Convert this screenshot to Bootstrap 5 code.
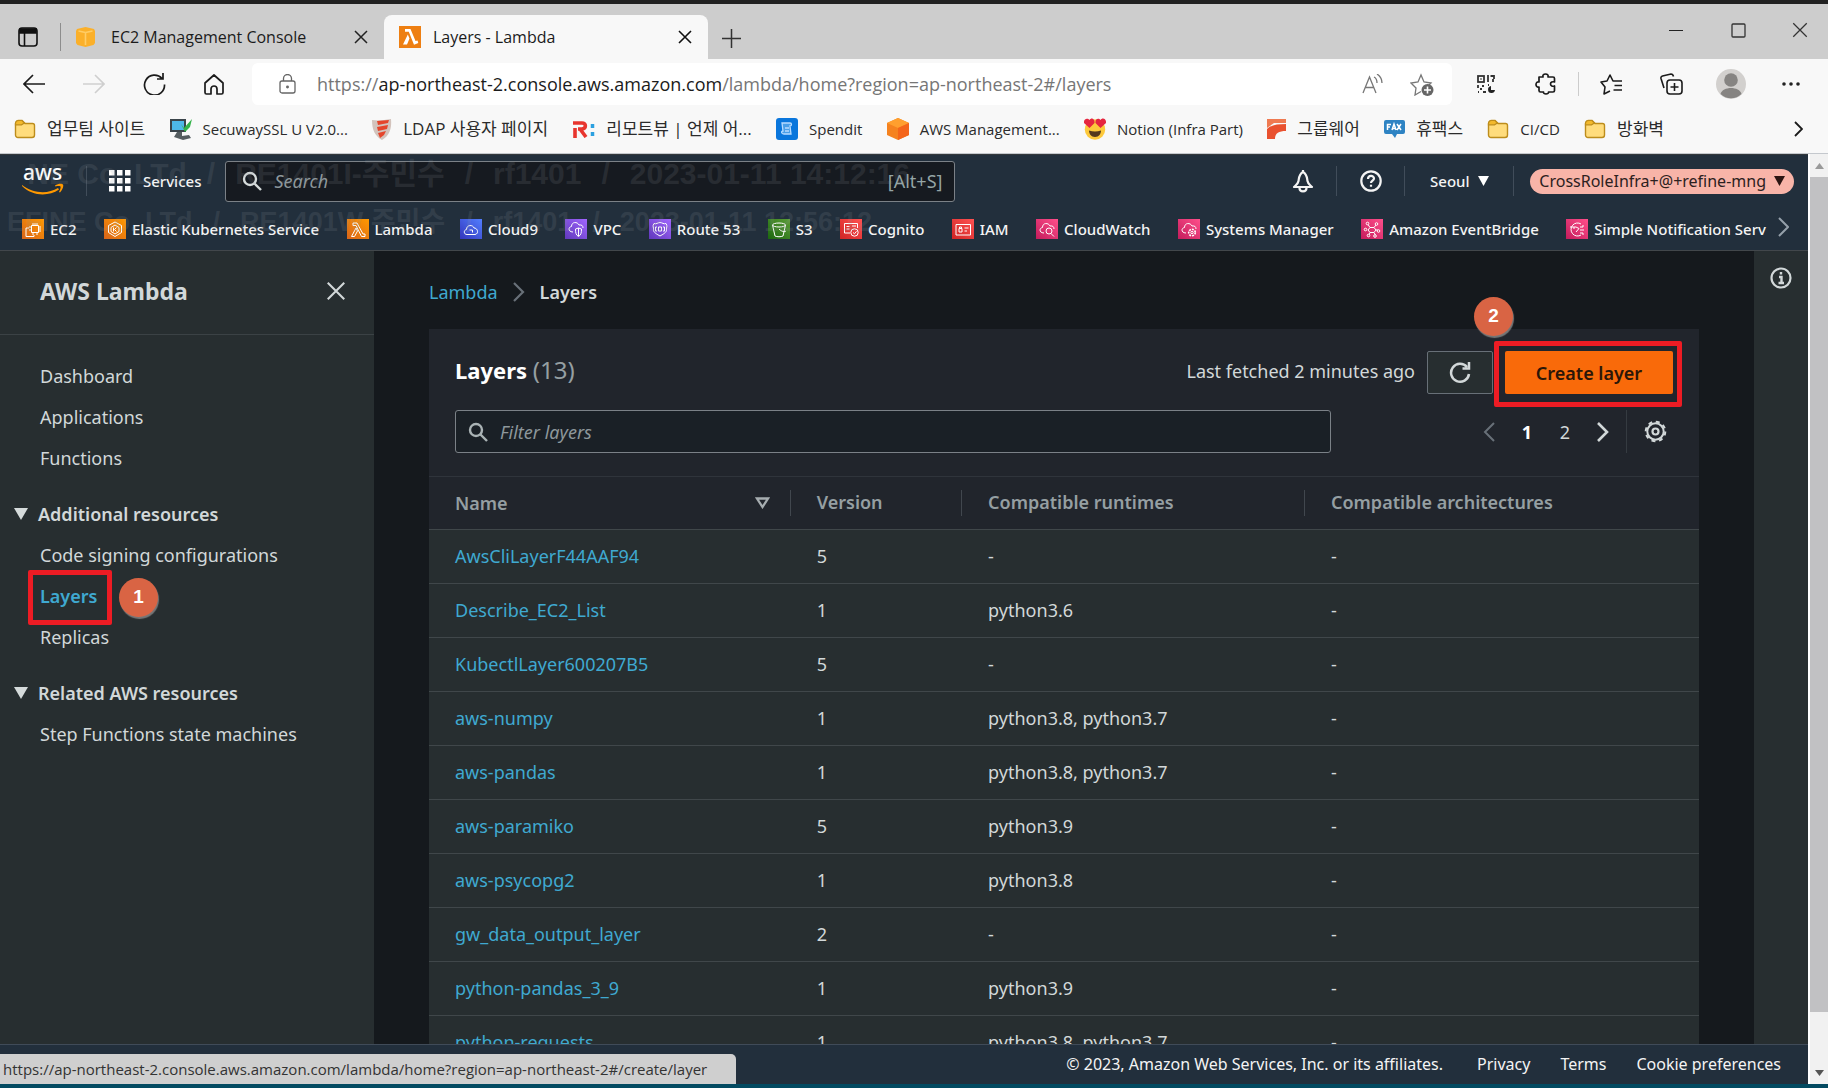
<!DOCTYPE html>
<html lang="en">
<head>
<meta charset="utf-8">
<meta name="viewport" content="width=device-width, initial-scale=1">
<title>Layers - Lambda</title>
<link href="https://cdn.jsdelivr.net/npm/bootstrap@5.3.0/dist/css/bootstrap.min.css" rel="stylesheet">
<style>
:root{--ui:"Noto Sans","Noto Sans CJK KR",sans-serif;--chrome:"Open Sans","Noto Sans CJK KR",sans-serif;--line:#40474a;--pane:#272e30;--link:#3fa9d0;--txt:#d2d8d9}
body{font-family:var(--ui);font-size:18px;line-height:24px;color:var(--txt);background:#15191d;overflow:hidden}
button{background:none;border:0;padding:0;color:inherit}
svg{display:block;flex:none}
svg:not([fill]){fill:none}
svg:not([stroke]){stroke:currentColor}
a{text-decoration:none}
.ic{display:flex;align-items:center;justify-content:center;flex:none}
/* browser chrome */
.browser{font-family:var(--chrome);color:#1b1b1b}
.topstrip{height:4px;background:#212121}
.tabbar{height:55px;background:#cdcdcd;font-size:16px}
.tabitem{height:44px;padding:0 15px}
.tabitem.idle{width:323px}
.tabitem.on{width:324px;background:#f8f8f8;border-radius:8px 8px 0 0}
.vsep{width:1px;height:28px;background:#8d8d8d}
.wbtn{width:62px;height:52px}
.wbtns{margin-right:-3px}
.newtab{width:46px;height:42px}
.toolbar2{height:50px;background:#f8f8f8;padding:0 7px 0 4px}
.toolsep{width:1px;height:24px;margin:0 2px;background:#ccc}
.slot{width:60px;height:42px}
.urlbtn{width:50px}
.address{height:42px;background:#fff;border-radius:6px;font-size:18px;padding:0 5px;color:#767676}
.address b{font-weight:400;color:#1b1b1b}
.favs{height:45px;background:#f8f8f8;font-size:15px;padding-left:14px;border-bottom:1px solid #c4c8cd}
.favs a{color:#2b2b2b;gap:11px}
.favs a.ko{font-size:17px}
.favlist{width:1650px}
/* console */
.topnav{background:#222f3c;border-top:1px solid #33383c;border-bottom:1px solid #42474b;color:#f4f4f4;height:97px}
.navrow{height:46px;padding:6px 14px 0 22px}
.navsep{width:1px;height:30px;background:#414d5a}
.navsep.wide{margin:0 22px}
.fieldbox{border:1px solid #7b8187;border-radius:3px;background:#161a20}
.fieldbox input{background:none;border:0;outline:0;color:inherit;font-style:italic;min-width:0}
.fieldbox input::placeholder{color:#8d979b;opacity:1}
.navsearch{width:730px;height:41px;margin-left:24px}
.kbd-hint{color:#95a5a6}
.pill{background:#f8b4a8;color:#2c2120;border-radius:13px;height:25px;padding:0 9px;font-size:16px}
.svc{font-size:15px;font-weight:500;color:#f4f4f4}
.svcbar{height:48px}
.svclist{width:1744px;margin-left:22px}
.svclist a{color:inherit;gap:6px}
.region{width:108px}
.bell{width:67px}
.wm{left:0;font:bold 30px/34px "Liberation Sans","Noto Sans CJK KR",sans-serif;color:#8f959b;opacity:.15;gap:20px;pointer-events:none;white-space:nowrap}
.wm1{top:2px;width:910px}
.wm2{top:50px;width:872px;font-size:27px}
.side{width:374px;background:var(--pane)}
.side .top{height:84px;border-bottom:1px solid #3b4245;padding:0 25px 4px 40px;font-size:23px}
.side a{color:var(--txt);height:41px;display:flex;align-items:center;padding-left:40px}
.side a.cur{color:var(--link);font-weight:600}
.side .sec{padding-left:14px;height:41px;gap:10px;margin-top:15px;font-weight:600}
.redbox{border:5px solid #ed1c24;border-radius:2px;pointer-events:none}
.r1{left:28px;top:-5px;width:84px;height:55px}
.r2{left:-11px;right:-9px;top:-10px;bottom:-13px}
.dot{width:39px;height:39px;border-radius:50%;background:#d96444;color:#fff;font:bold 19px/37px "Liberation Sans",sans-serif;text-align:center;box-shadow:1px 2px 1px #777}
.d1{left:119px;top:3px}
.d2{left:-31px;top:-54px}
.mainarea{padding:0 55px;min-width:0}
.crumb{height:78px;gap:15px}
.here{font-weight:600}
.bluelink{color:var(--link)}
.panel{background:#21252c}
.phead{padding:22px 26px 23px;border-bottom:1px solid #2f343b}
.phead h1{font-size:22px;color:#fff}
.count{color:#959fa2;font-size:24px}
.btn-ref{width:66px;height:43px;border:1px solid #687078;border-radius:2px;background:var(--pane)}
.btn-create{width:168px;height:43px;background:#f96a0a;border:0;border-radius:2px;color:#2b1608;font-weight:600}
.filter{width:876px;height:43px;background:#1a2026}
.pg{width:38px;height:43px}
.pgsep{width:1px;height:43px;background:#353b41}
.gearbtn{width:35px;margin-left:11px}
.table.lay{table-layout:fixed;margin:0;--bs-table-bg:transparent;color:var(--txt);border-color:var(--line)}
.lay .c1{width:28.4%}.lay .c2{width:13.5%}.lay .c3{width:27%}
.lay th{padding:0;height:52px;color:#959fa2;font-weight:600;border-bottom:1px solid var(--line);vertical-align:middle}
.lay td{padding:0 0 0 27px;height:54px;background:var(--pane);border-bottom:1px solid var(--line);vertical-align:middle;color:var(--txt);box-shadow:none}
.lay td:first-child{padding-left:26px}
.hc{height:26px;padding-left:26px;border-left:1px solid #41474e}
.hc.first{border:0;padding-right:20px}
.tools{width:54px;background:var(--pane)}
.foot{height:40px;background:#222f3c;border-top:1px solid #404b58;font-size:16px;color:#f4f4f4;padding:0 27px 1px 0;gap:30px}
.foot a{color:#f4f4f4}
.sbar{width:20px;background:#f1f1f1;border-left:2px solid #fff}
.arrowcell{height:23px}
.thumb{background:#c1c1c3;height:835px}
.status{left:0;bottom:4px;height:30px;min-width:736px;background:#cfcfcf;color:#333;border-radius:0 5px 0 0;font:15px/30px var(--chrome);padding:0 10px 0 3px}
.bottomstrip{height:4px;background:#034a61}
.fit{min-height:0;min-width:0}
</style>
<script src="https://cdn.jsdelivr.net/npm/bootstrap@5.3.0/dist/js/bootstrap.bundle.min.js"></script>
</head>
<body class="d-flex flex-column vh-100 position-relative">
<svg width="0" height="0" class="position-absolute" aria-hidden="true">
 <defs>
  <linearGradient id="go" x1="0" y1="1" x2="1" y2="0"><stop offset="0" stop-color="#d8641a"/><stop offset="1" stop-color="#f90"/></linearGradient>
  <linearGradient id="gb" x1="0" y1="1" x2="1" y2="0"><stop offset="0" stop-color="#3334bb"/><stop offset="1" stop-color="#527fff"/></linearGradient>
  <linearGradient id="gp" x1="0" y1="1" x2="1" y2="0"><stop offset="0" stop-color="#6038bb"/><stop offset="1" stop-color="#a166ff"/></linearGradient>
  <linearGradient id="gg" x1="0" y1="1" x2="1" y2="0"><stop offset="0" stop-color="#1b660f"/><stop offset="1" stop-color="#5c9e36"/></linearGradient>
  <linearGradient id="gr" x1="0" y1="1" x2="1" y2="0"><stop offset="0" stop-color="#cf2424"/><stop offset="1" stop-color="#ff5252"/></linearGradient>
  <linearGradient id="gk" x1="0" y1="1" x2="1" y2="0"><stop offset="0" stop-color="#c41c5c"/><stop offset="1" stop-color="#ff4f8b"/></linearGradient>
  <symbol id="x" viewBox="0 0 16 16"><path d="M2 2l12 12M14 2L2 14"/></symbol>
  <symbol id="mag" viewBox="0 0 20 20"><circle cx="8" cy="8" r="6"/><path d="M12.500 12.500L19 19"/></symbol>
  <symbol id="folder" viewBox="0 0 22 20"><path d="M1.500 4.500a3 3 0 0 1 3-3H8l3 3h7.500a2 2 0 0 1 2 2V16a2.500 2.500 0 0 1-2.500 2.500H4A2.500 2.500 0 0 1 1.500 16z" fill="#ffdc7c" stroke="#bd8d1c" stroke-width="1.400"/><path d="M1.500 5.800h6L10.500 4 8 1.500H4.500a3 3 0 0 0-3 3z" fill="#f3b92c" stroke="#bd8d1c" stroke-width="1.200"/></symbol>
 </defs>
</svg>

<header class="browser flex-shrink-0">
 <div class="topstrip"></div>
 <div class="tabbar d-flex align-items-end">
  <div class="d-flex align-items-center flex-shrink-0 tabitem px-0">
   <button class="ic slot pe-1" aria-label="Tab actions"><svg width="20" height="20" viewBox="0 0 20 20" stroke="#111" stroke-width="1.600"><rect x="1" y="1" width="18" height="18" rx="3"/><path d="M2 2h16v4H2z" fill="#111"/><path d="M6.500 6v13"/></svg></button>
   <span class="vsep"></span>
  </div>
  <div class="tabitem idle d-flex align-items-center">
   <svg width="19" height="20" viewBox="0 0 19 20" stroke="none"><path d="M9.500 0L18 2l1 2v12l-1.500 2-8 2-8-2L0 16V4l1-2z" fill="#fbb02a"/><path d="M9.500 5.500l7-1.500M9.500 5.500L2.500 4M9.500 6v12" stroke="#ffcd66" stroke-width="1.600"/></svg>
   <span class="flex-fill ps-3">EC2 Management Console</span>
   <button class="ic" aria-label="Close tab"><svg width="16" height="16" stroke="#222" stroke-width="1.500"><use href="#x"/></svg></button>
  </div>
  <div class="tabitem on d-flex align-items-center">
   <svg width="22" height="22" viewBox="0 0 22 22" stroke="none"><path d="M0 0h22v22H0z" fill="#ee7f12"/><path d="M6 3h5.500l5 12 2-.5.800 2.500-4.300 1.800-5.200-13H6zM8.800 8.500l1.700 4L8 18.500H4z" fill="#fff"/></svg>
   <span class="flex-fill ps-2 ms-1">Layers - Lambda</span>
   <button class="ic" aria-label="Close tab"><svg width="16" height="16" stroke="#111" stroke-width="1.600"><use href="#x"/></svg></button>
  </div>
  <button class="ic newtab" aria-label="New tab"><svg width="19" height="19" viewBox="0 0 19 19" stroke="#333" stroke-width="1.500"><path d="M9.500 0v19M0 9.500h19"/></svg></button>
  <div class="d-flex ms-auto align-self-start wbtns">
   <button class="ic wbtn" aria-label="Minimize"><svg width="14" height="14" viewBox="0 0 14 14" stroke="#222"><path d="M0 7.500h14"/></svg></button>
   <button class="ic wbtn" aria-label="Maximize"><svg width="15" height="15" viewBox="0 0 15 15" stroke="#333" stroke-width="1.300"><rect x="1" y="1" width="13" height="13" rx="1"/></svg></button>
   <button class="ic wbtn" aria-label="Close"><svg width="18" height="18" stroke="#333" stroke-width="1.100"><use href="#x"/></svg></button>
  </div>
 </div>
 <div class="toolbar2 d-flex align-items-center">
  <button class="ic slot" aria-label="Back"><svg width="22" height="20" viewBox="0 0 22 20" stroke-width="1.700"><path d="M22 10H1M10 1l-9 9 9 9"/></svg></button>
  <button class="ic slot" aria-label="Forward"><svg width="22" height="20" viewBox="0 0 22 20" stroke="#cfcfcf" stroke-width="1.600"><path d="M0 10h21M12 1l9 9-9 9"/></svg></button>
  <button class="ic slot" aria-label="Reload"><svg width="23" height="22" viewBox="0 0 23 22" stroke-width="1.700"><path d="M19 5.500A10 10 0 1 0 21.500 11.500M14 6h6V0"/></svg></button>
  <button class="ic slot" aria-label="Home"><svg width="20" height="21" viewBox="0 0 20 21" stroke-width="1.700" stroke-linejoin="round"><path d="M1 9l9-8 9 8v9.500a1.500 1.500 0 0 1-1.500 1.500H13v-5a3 3 0 0 0-6 0v5H2.500A1.500 1.500 0 0 1 1 18.500z"/></svg></button>
  <div class="address d-flex align-items-center flex-fill ms-2">
   <span class="ic slot"><svg width="17" height="20" viewBox="0 0 17 20" stroke="#666" stroke-width="1.300"><rect x="1" y="7" width="15" height="12" rx="2"/><path d="M4.500 7V4.500a4 4 0 0 1 8 0V7"/><circle cx="8.500" cy="13" r=".8" fill="#666"/></svg></span>
   <span class="flex-fill">https://<b>ap-northeast-2.console.aws.amazon.com</b>/lambda/home?region=ap-northeast-2#/layers</span>
   <button class="ic urlbtn" aria-label="Read aloud"><svg width="21" height="20" viewBox="0 0 21 20" stroke="#777" stroke-width="1.300"><path d="M1 19L7.500 3 14 19M3.500 13.500h8M12 3c2 1 3 3 3 6M15 0c3 2 5 5 5 9"/></svg></button>
   <button class="ic urlbtn" aria-label="Add to favorites"><svg width="24" height="23" viewBox="0 0 24 23" stroke="#777" stroke-width="1.300"><path d="M11 18.500L5 22l1-7-5-5 7-1 3-7 3 7 7 1-3 3"/><circle cx="17.500" cy="17" r="6" fill="#666" stroke="none"/><path d="M17.500 13.500v7M14 17h7" stroke="#fff" stroke-width="1.600"/></svg></button>
  </div>
  <button class="ic slot ms-1" aria-label="QR code"><svg width="20" height="20" viewBox="0 0 20 20" stroke="#333" stroke-width="1.800"><rect x="2" y="2" width="6" height="6"/><path d="M4.500 5h1M12 1v7M14.500 2H18v3M17 5v3M2 11v3M6 12h2M4 15h2M2 18h1M7 18h3M12 11h1"/><path d="M15 12a3.500 3.500 0 1 0 4 4h-4z" fill="#222" stroke="none"/></svg></button>
  <button class="ic slot" aria-label="Extensions"><svg width="22" height="22" viewBox="0 0 22 22" stroke-width="1.700" stroke-linejoin="round"><path d="M4 4h4c-.5-2 .5-3 2.500-3S13.500 2 13 4h5a1.500 1.500 0 0 1 1.500 1.500V9c-2-.7-4 .2-4 2s2 2.700 4 2v4.500A1.500 1.500 0 0 1 18 19h-4.500c.5 1-1 2-2.500 2s-3-1-2.500-2H5.500A1.500 1.500 0 0 1 4 17.500V14c-2 .5-3-1-3-2.500S2 8.500 4 9z"/></svg></button>
  <span class="toolsep"></span>
  <button class="ic slot" aria-label="Favorites"><svg width="23" height="21" viewBox="0 0 23 21" stroke-width="1.600" stroke-linejoin="round"><path d="M10 17l-6 3 1-7-4-5 6-1 3-6 3 6h9M14.500 11.500H22M13.500 16H22"/></svg></button>
  <button class="ic slot" aria-label="Collections"><svg width="23" height="22" viewBox="0 0 23 22" stroke-width="1.600"><rect x="7" y="7" width="15" height="14" rx="3"/><path d="M14.500 10v8M10.500 14h8M4 15L1 5.500A2 2 0 0 1 2.500 3L11 1c1.500 0 2 .5 2.500 2.500"/></svg></button>
  <button class="ic slot" aria-label="Profile"><svg width="30" height="30" viewBox="0 0 30 30" stroke="none"><circle cx="15" cy="15" r="15" fill="#d2d0ce"/><circle cx="15" cy="11" r="6.800" fill="#868482"/><path d="M4.500 25c2-8 19-8 21 0a15 15 0 0 1-21 0z" fill="#868482"/></svg></button>
  <button class="ic slot" aria-label="Settings and more"><svg width="18" height="4" viewBox="0 0 18 4" stroke="none" fill="#222"><circle cx="2" cy="2" r="1.800"/><circle cx="9" cy="2" r="1.800"/><circle cx="16" cy="2" r="1.800"/></svg></button>
 </div>
 <nav class="favs d-flex align-items-center text-nowrap">
  <div class="favlist d-flex justify-content-between align-items-center flex-shrink-0 pb-1">
   <a href="#" class="ko d-flex align-items-center"><svg width="22" height="20"><use href="#folder"/></svg>업무팀 사이트</a>
   <a href="#" class="d-flex align-items-center"><svg width="22" height="22" viewBox="0 0 22 22" stroke="none"><path d="M0 1h16v13H0z" fill="#3a444a"/><path d="M2 3h12v9H2z" fill="#4db8e8"/><path d="M11 6l3 4 8-9-2 8-5 5z" fill="#35b34a"/><path d="M7 14h5v4l7-1 2 3-8 2-9-3z" fill="#555d60"/></svg>SecuwaySSL U V2.0...</a>
   <a href="#" class="ko d-flex align-items-center"><svg width="20" height="21" viewBox="0 0 20 21" stroke="none"><path d="M0 1c7 1 12 0 19-1 1 10-2 17-9 21C3 17 0 11 0 1z" fill="#d3c3bc"/><path d="M5 2l12-1-1 3-10 2zM5 8l11-2-1 4-9 2zM6 14l8-2-2 4-4 3z" fill="#e5452b"/></svg>LDAP 사용자 페이지</a>
   <a href="#" class="ko d-flex align-items-center"><svg width="23" height="18" viewBox="0 0 23 18" stroke="#e8352e" stroke-width="3.600"><path d="M1 3h9c4.500 0 4.500 5.500 0 6H6M3 8v10M8 9l6 8"/><path d="M20.500 4v4M20.500 12v4" stroke="#2ba0e0" stroke-width="3.500"/></svg>리모트뷰 | 언제 어...</a>
   <a href="#" class="d-flex align-items-center"><svg width="22" height="22" viewBox="0 0 22 22" stroke="#b9dcff" stroke-width="1.300"><rect width="22" height="22" rx="3" fill="#0a76dc" stroke="none"/><path d="M6 5h8c2 0 2 3 0 3l1 8H8c-3 0-3-3-1-3L6 5zM9 10h4M9 13h4" fill="#4b9fe8"/></svg>Spendit</a>
   <a href="#" class="d-flex align-items-center"><svg width="22" height="22" viewBox="0 0 22 22" stroke="none"><path d="M11 0l11 5v12l-11 5L0 17V5z" fill="#f5821f"/><path d="M11 0l11 5-11 5L0 5z" fill="#ff9f2e"/><path d="M11 10l11-5v12l-11 5z" fill="#f4651a"/></svg>AWS Management...</a>
   <a href="#" class="d-flex align-items-center"><svg width="22" height="22" viewBox="0 0 22 22" stroke="none"><circle cx="11" cy="11.500" r="10.200" fill="#fdc93c"/><path d="M5.500 10L0 5C-.5 0 4 0 5.500 2 7-.5 11 0 10.500 5zM16.500 10L11.500 5C11 0 15 0 16.500 2 18-.5 22.500 0 22 5z" fill="#e5263f"/><path d="M5 12.500q6 2 12 0c0 3-2 6.500-6 6.500s-6-3.500-6-6.500z" fill="#54381c"/></svg>Notion (Infra Part)</a>
   <a href="#" class="ko d-flex align-items-center"><svg width="19" height="20" viewBox="0 0 19 20" stroke="none"><path d="M0 0h19v4H7L0 9z" fill="#ef7a51"/><path d="M0 10C4 6 10 5 19 5v7c-7 0-11 2-11 8H0z" fill="#e9512f"/></svg>그룹웨어</a>
   <a href="#" class="ko d-flex align-items-center"><svg width="21" height="18" viewBox="0 0 21 18" stroke="#fff" stroke-width="1.500"><path d="M2 0h17a2 2 0 0 1 2 2v10a2 2 0 0 1-2 2h-6l-2 4-3-4H2a2 2 0 0 1-2-2V2a2 2 0 0 1 2-2z" fill="#2e83c3" stroke="none"/><path d="M3.500 10V4.500H7M3.500 7H6M8 10l2-6 2 6M8.500 8.500h3M13 4l4 6M17 4l-4 6"/></svg>휴팩스</a>
   <a href="#" class="d-flex align-items-center"><svg width="22" height="20"><use href="#folder"/></svg>CI/CD</a>
   <a href="#" class="ko d-flex align-items-center"><svg width="22" height="20"><use href="#folder"/></svg>방화벽</a>
  </div>
  <button class="ic ms-auto slot pb-1" aria-label="More favorites"><svg width="9" height="16" viewBox="0 0 9 16" stroke-width="1.800"><path d="M1 1l7 7-7 7"/></svg></button>
 </nav>
</header>

<div class="d-flex flex-fill fit">
 <div class="d-flex flex-column flex-fill fit">
  <header class="topnav position-relative flex-shrink-0 overflow-hidden">
   <div class="navrow d-flex align-items-center">
    <a href="#" aria-label="AWS home" class="text-white d-block"><svg width="42" height="28" viewBox="0 0 42 28" stroke="none"><text x="1" y="13" font-family="Noto Sans, sans-serif" font-size="21" font-weight="500" fill="#fff">aws</text><path d="M0 18c12 9 26 9 36 3l1 1.500C26 30 10 29 0 19zM33 18.500c3-2 7-2 8-1 1 2-1 6-3 8l-1-.5c1-2 2-4.500 1.500-5.500-1-.6-3-.5-5 0z" fill="#f90"/></svg></a>
    <span class="navsep wide"></span>
    <button class="d-flex align-items-center svc"><svg width="22" height="22" viewBox="0 0 22 22" stroke="none" fill="#fff"><path d="M0 0h5.500v5.500H0zM8 0h5.500v5.500H8zM16 0h5.500v5.500H16zM0 8h5.500v5.500H0zM8 8h5.500v5.500H8zM16 8h5.500v5.500H16zM0 16h5.500v5.500H0zM8 16h5.500v5.500H8zM16 16h5.500v5.500H16z"/></svg><span class="ms-2 ps-1">Services</span></button>
    <label class="fieldbox navsearch d-flex align-items-center ps-3 pe-2">
     <svg width="20" height="20" stroke="#d5dbdb" stroke-width="2.400"><use href="#mag"/></svg>
     <input class="flex-fill ms-2 ps-1" type="search" placeholder="Search" aria-label="Search">
     <span class="kbd-hint me-1">[Alt+S]</span>
    </label>
    <div class="d-flex align-items-center ms-auto">
     <button class="ic bell" aria-label="Notifications"><svg width="22" height="23" viewBox="0 0 22 23" stroke-width="2.200" stroke-linejoin="round"><path d="M11 2C7 4 7 8 6.500 11 6 14 4 15 2 17h18c-2-2-4-3-4.500-6C15 8 15 4 11 2zM11 0v3M7.500 18c0 4.500 7 4.500 7 0"/></svg></button>
     <span class="navsep"></span>
     <button class="ic bell" aria-label="Help"><svg width="22" height="22" viewBox="0 0 22 22" stroke-width="2.200"><circle cx="11" cy="11" r="9.700"/><path d="M8 9c0-4 6-4 6-.5 0 2-3 2.300-3 4.500M11 14.800v2"/></svg></button>
     <span class="navsep"></span>
     <button class="d-flex align-items-center justify-content-center svc gap-2 region">Seoul<svg width="11" height="10" viewBox="0 0 11 10" fill="#fff" stroke="none"><path d="M0 0h11L5.500 10z"/></svg></button>
     <span class="navsep"></span>
     <button class="pill d-flex align-items-center ms-3"><span class="me-2">CrossRoleInfra+@+refine-mng</span><svg width="11" height="10" viewBox="0 0 11 10" fill="#2c1512" stroke="none"><path d="M0 0h11L5.500 10z"/></svg></button>
    </div>
   </div>
   <nav class="d-flex align-items-center svc text-nowrap svcbar">
    <div class="svclist d-flex justify-content-between flex-shrink-0 pt-2">
     <a href="#" class="d-flex align-items-center"><svg width="22" height="20" viewBox="0 0 22 20" stroke="#fff"><path d="M0 0h22v20H0z" fill="url(#go)" stroke="none"/><path d="M9.500 6.500h7v7h-7zM11 4v2.500M13 4v2.500M15 4v2.500M11 13.500V16M15 13.500V16M16.500 8H19M16.500 10H19M16.500 12H19M7 8h2.500M7 11h2.500M7 9H4v8.500h8V16"/></svg>EC2</a>
     <a href="#" class="d-flex align-items-center"><svg width="22" height="20" viewBox="0 0 22 20" stroke="#fff"><path d="M0 0h22v20H0z" fill="url(#go)" stroke="none"/><path d="M11 3l6.500 3.500v7L11 17.500l-6.500-4v-7zM11 6l4 2.500v4L11 15l-4-2.500v-4zM9.500 8.500v4M12.500 8.500l-2 2 2 2"/></svg>Elastic Kubernetes Service</a>
     <a href="#" class="d-flex align-items-center"><svg width="22" height="20" viewBox="0 0 22 20" stroke="#fff"><path d="M0 0h22v20H0z" fill="url(#go)" stroke="none"/><path d="M6 4h4l6 11h2v2.500h-3.500L9 6.500H6zM9 9l-4.500 8.500h3L10.500 12z"/></svg>Lambda</a>
     <a href="#" class="d-flex align-items-center"><svg width="22" height="20" viewBox="0 0 22 20" stroke="#fff"><path d="M0 0h22v20H0z" fill="url(#gb)" stroke="none"/><path d="M7 15.500c-3.500 0-3.500-4.500-.5-5 0-5 6.500-5 7.500-1.500 4 0 5 6 1 6.500zM9.500 11h3v2.500"/></svg>Cloud9</a>
     <a href="#" class="d-flex align-items-center"><svg width="22" height="20" viewBox="0 0 22 20" stroke="#fff"><path d="M0 0h22v20H0z" fill="url(#gp)" stroke="none"/><path d="M8 13c-5 0-5-5-1.500-5.500 0-5 6-5 7.500-1.500 3-.5 4 1 4 3M10.500 10l3-1 3 1c0 4-.5 6-3 7.500-2.500-1.500-3-3.500-3-7.500zM13.500 9v8"/></svg>VPC</a>
     <a href="#" class="d-flex align-items-center"><svg width="22" height="20" viewBox="0 0 22 20" stroke="#fff"><path d="M0 0h22v20H0z" fill="url(#gp)" stroke="none"/><path d="M5 4.500c2 1 4-1 6-1s4 2 6 1c2 3 0 4 .5 6 .5 3-4 5-6.500 6.500C8.500 15.500 4 13.500 4.500 10.500 5 8.500 3 7.500 5 4.500zM8 8H6.500v4H8M9.500 8h3v4h-3zM14 8h1.500v4H14"/></svg>Route 53</a>
     <a href="#" class="d-flex align-items-center"><svg width="22" height="20" viewBox="0 0 22 20" stroke="#fff"><path d="M0 0h22v20H0z" fill="url(#gg)" stroke="none"/><ellipse cx="11" cy="6" rx="6.500" ry="2"/><path d="M4.500 6L7 17c2 1 6 1 8 0l2.500-11M11 10c3 3 6 3 7 2"/></svg>S3</a>
     <a href="#" class="d-flex align-items-center"><svg width="22" height="20" viewBox="0 0 22 20" stroke="#fff"><path d="M0 0h22v20H0z" fill="url(#gr)" stroke="none"/><path d="M10 14H4.500V4.500h13V9M6.500 7.500h3M6.500 10h3M12 7h4"/><circle cx="14.500" cy="13.500" r="3.700"/><path d="M13 13.500l1.500 1.300 2-2.500"/></svg>Cognito</a>
     <a href="#" class="d-flex align-items-center"><svg width="22" height="20" viewBox="0 0 22 20" stroke="#fff"><path d="M0 0h22v20H0z" fill="url(#gr)" stroke="none"/><path d="M4 5.500h14.500V16H4zM7 13V9.500h3V13zM7.500 9.500V8h2v1.500M12.500 9h4M12.500 12h2.500"/></svg>IAM</a>
     <a href="#" class="d-flex align-items-center"><svg width="22" height="20" viewBox="0 0 22 20" stroke="#fff"><path d="M0 0h22v20H0z" fill="url(#gk)" stroke="none"/><path d="M8 14c-5 0-5-5-1.500-5.500 0-5 6-5 7.500-1.500 3-.5 4 1 4 3"/><circle cx="13" cy="12" r="3"/><path d="M15 14.500l3 3"/></svg>CloudWatch</a>
     <a href="#" class="d-flex align-items-center"><svg width="22" height="20" viewBox="0 0 22 20" stroke="#fff"><path d="M0 0h22v20H0z" fill="url(#gk)" stroke="none"/><path d="M8 14c-5 0-5-5-1.500-5.500 0-5 6-5 7.500-1.500 3-.5 4 1 4 3"/><circle cx="14" cy="13.500" r="3.300" stroke-dasharray="2 1" stroke-width="1.600"/><circle cx="14" cy="13.500" r="1.200"/></svg>Systems Manager</a>
     <a href="#" class="d-flex align-items-center"><svg width="22" height="20" viewBox="0 0 22 20" stroke="#fff"><path d="M0 0h22v20H0z" fill="url(#gk)" stroke="none"/><path d="M9 8.500h4l2 2.500-2 2.500H9L7 11zM9 8.500L7 5.500M13 8.500L15 6M15 11h2M13 13.500l1.500 2.500M9 13.500L8 16"/><g fill="#e33670"><circle cx="6.500" cy="4.500" r="1.300"/><circle cx="15.500" cy="5" r="1.300"/><circle cx="17.500" cy="12" r="1.300"/><circle cx="14" cy="17" r="1.300"/><circle cx="7.500" cy="16.500" r="1.300"/><circle cx="4.500" cy="10.500" r="1.300"/></g></svg>Amazon EventBridge</a>
     <a href="#" class="d-flex align-items-center"><svg width="22" height="20" viewBox="0 0 22 20" stroke="#fff"><path d="M0 0h22v20H0z" fill="url(#gk)" stroke="none"/><path d="M15 5a6.500 6.500 0 1 0 0 11M4 8h6l3 1.500L10 13M8 8v2M14 8h3v-2M14 11h4M14 14h3v2"/></svg>Simple Notification Serv</a>
    </div>
    <button class="ic ms-2 ps-1 pt-1" aria-label="Scroll services"><svg width="11" height="20" viewBox="0 0 11 20" stroke="#95a0aa" stroke-width="2"><path d="M1 1l9 9-9 9"/></svg></button>
   </nav>
   <div class="wm wm1 position-absolute d-flex justify-content-end overflow-hidden" aria-hidden="true"><span>NE Co. LTd</span><span>/</span><span>RE1401I-주민수</span><span>/</span><span>rf1401</span><span>/</span><span>2023-01-11 14:12:16</span></div>
   <div class="wm wm2 position-absolute d-flex justify-content-end overflow-hidden" aria-hidden="true"><span>EFINE Co. LTd</span><span>/</span><span>RE1401W 주민수</span><span>/</span><span>rf1401</span><span>/</span><span>2023-01-11 12:56:12</span></div>
  </header>

  <div class="d-flex flex-fill overflow-hidden fit">
   <aside class="side flex-shrink-0">
    <div class="top d-flex align-items-center justify-content-between"><b>AWS Lambda</b><button class="ic" aria-label="Close navigation"><svg width="26" height="22" viewBox="0 0 16 16" stroke-width="1.500"><use href="#x"/></svg></button></div>
    <nav class="pt-1 mt-3">
     <a href="#">Dashboard</a><a href="#">Applications</a><a href="#">Functions</a>
     <div class="sec d-flex align-items-center"><svg width="14" height="12" viewBox="0 0 14 12" fill="#d5dbdb" stroke="none"><path d="M0 0h14L7 12z"/></svg>Additional resources</div>
     <a href="#">Code signing configurations</a>
     <div class="position-relative"><a href="#" class="cur">Layers</a><span class="redbox r1 position-absolute"></span><span class="dot d1 position-absolute">1</span></div>
     <a href="#">Replicas</a>
     <div class="sec d-flex align-items-center"><svg width="14" height="12" viewBox="0 0 14 12" fill="#d5dbdb" stroke="none"><path d="M0 0h14L7 12z"/></svg>Related AWS resources</div>
     <a href="#">Step Functions state machines</a>
    </nav>
   </aside>
   <main class="mainarea flex-fill">
    <div class="crumb d-flex align-items-center pt-1"><a href="#" class="bluelink">Lambda</a><svg width="12" height="20" viewBox="0 0 12 20" stroke="#687078" stroke-width="2.200"><path d="M1 1l9 9-9 9"/></svg><span class="here">Layers</span></div>
    <section class="panel">
     <div class="phead">
      <div class="d-flex align-items-center">
       <h1 class="m-0 pb-1"><b>Layers</b> <span class="count fw-normal">(13)</span></h1>
       <span class="ms-auto me-2 pe-1 pb-1">Last fetched 2 minutes ago</span>
       <button class="ic btn-ref" aria-label="Refresh"><svg width="22" height="23" viewBox="0 0 22 23" stroke-width="2.500"><path d="M18 6A9 9 0 1 0 20 13M13.500 7.500H20V1"/></svg></button>
       <div class="ms-2 ps-1"><div class="position-relative"><button class="btn-create d-block">Create layer</button><span class="redbox r2 position-absolute"></span><span class="dot d2 position-absolute">2</span></div></div>
      </div>
      <div class="d-flex align-items-center justify-content-between mt-3">
       <label class="fieldbox filter d-flex align-items-center px-2"><svg class="ms-1" width="20" height="20" stroke="#aab3b5" stroke-width="2.400"><use href="#mag"/></svg><input class="flex-fill ms-2 ps-1" type="search" placeholder="Filter layers" aria-label="Filter layers"></label>
       <div class="d-flex align-items-center">
        <button class="ic pg" aria-label="Previous page"><svg width="12" height="20" viewBox="0 0 12 20" stroke="#687078" stroke-width="2"><path d="M11 1L2 10l9 9"/></svg></button>
        <button class="pg text-white"><b>1</b></button><button class="pg">2</button>
        <button class="ic pg" aria-label="Next page"><svg width="12" height="20" viewBox="0 0 12 20" stroke-width="2.600"><path d="M1 1l9 9-9 9"/></svg></button>
        <span class="ms-1 pgsep"></span>
        <button class="ic gearbtn" aria-label="Settings"><svg width="23" height="23" viewBox="0 0 23 23"><circle cx="11.500" cy="11.500" r="8.200" stroke-width="2"/><circle cx="11.500" cy="11.500" r="9.800" stroke-width="2" stroke-dasharray="4 3.700"/><circle cx="11.500" cy="11.500" r="3" stroke-width="2.200"/></svg></button>
       </div>
      </div>
     </div>
     <table class="table lay">
      <colgroup><col class="c1"><col class="c2"><col class="c3"><col></colgroup>
      <thead><tr><th scope="col"><div class="hc first d-flex align-items-center justify-content-between">Name<svg width="15" height="12" viewBox="0 0 15 12" stroke="#a6adb0" stroke-width="2.300"><path d="M2 1.500h11l-5.500 8.500z"/></svg></div></th><th scope="col"><div class="hc">Version</div></th><th scope="col"><div class="hc">Compatible runtimes</div></th><th scope="col"><div class="hc">Compatible architectures</div></th></tr></thead>
      <tbody>
       <tr><td><a href="#" class="bluelink">AwsCliLayerF44AAF94</a></td><td>5</td><td>-</td><td>-</td></tr>
       <tr><td><a href="#" class="bluelink">Describe_EC2_List</a></td><td>1</td><td>python3.6</td><td>-</td></tr>
       <tr><td><a href="#" class="bluelink">KubectlLayer600207B5</a></td><td>5</td><td>-</td><td>-</td></tr>
       <tr><td><a href="#" class="bluelink">aws-numpy</a></td><td>1</td><td>python3.8, python3.7</td><td>-</td></tr>
       <tr><td><a href="#" class="bluelink">aws-pandas</a></td><td>1</td><td>python3.8, python3.7</td><td>-</td></tr>
       <tr><td><a href="#" class="bluelink">aws-paramiko</a></td><td>5</td><td>python3.9</td><td>-</td></tr>
       <tr><td><a href="#" class="bluelink">aws-psycopg2</a></td><td>1</td><td>python3.8</td><td>-</td></tr>
       <tr><td><a href="#" class="bluelink">gw_data_output_layer</a></td><td>2</td><td>-</td><td>-</td></tr>
       <tr><td><a href="#" class="bluelink">python-pandas_3_9</a></td><td>1</td><td>python3.9</td><td>-</td></tr>
       <tr><td><a href="#" class="bluelink">python-requests</a></td><td>1</td><td>python3.8, python3.7</td><td>-</td></tr>
      </tbody>
     </table>
    </section>
   </main>
   <aside class="tools flex-shrink-0 d-flex justify-content-center pt-3"><button class="ic align-self-start" aria-label="Info"><svg width="22" height="22" viewBox="0 0 22 22" stroke-width="2.200"><circle cx="11" cy="11" r="9.500"/><path d="M11 5v2.500M9 10h2.500v6M8.500 16h5.500" stroke-width="2.400"/></svg></button></aside>
  </div>
  <footer class="foot d-flex align-items-center justify-content-end flex-shrink-0"><span class="me-1">© 2023, Amazon Web Services, Inc. or its affiliates.</span><a href="#">Privacy</a><a href="#">Terms</a><a href="#">Cookie preferences</a></footer>
 </div>
 <div class="sbar flex-shrink-0 d-flex flex-column" aria-hidden="true">
  <span class="ic arrowcell"><svg width="9" height="6" viewBox="0 0 9 6" fill="#999" stroke="none"><path d="M0 6h9L4.500 0z"/></svg></span>
  <span class="thumb"></span>
  <span class="ic arrowcell mt-auto"><svg width="9" height="6" viewBox="0 0 9 6" fill="#555" stroke="none"><path d="M0 0h9L4.500 6z"/></svg></span>
 </div>
</div>
<div class="bottomstrip flex-shrink-0"></div>
<div class="status position-absolute">https://ap-northeast-2.console.aws.amazon.com/lambda/home?region=ap-northeast-2#/create/layer</div>
</body>
</html>
